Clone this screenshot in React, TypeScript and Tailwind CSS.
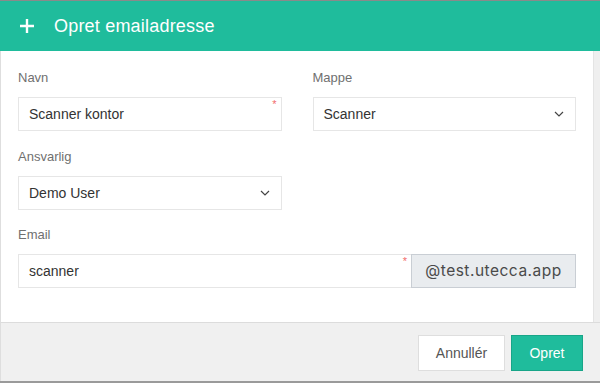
import React from 'react';

const Chevron = () => (
  <svg width="10" height="6" viewBox="0 0 10 6" fill="none" className="shrink-0">
    <path d="M1 1l4 4 4-4" stroke="#444" strokeWidth="1.2" />
  </svg>
);

const Asterisk = () => (
  <span className="absolute right-[4px] top-[1px] text-[11px] leading-none text-[#f26b6b]">*</span>
);

function Label({ children }: { children: React.ReactNode }) {
  return <div className="h-[18px] mb-[10px] text-[13px] leading-[18px] text-[#707070]">{children}</div>;
}

function SelectBox({ value }: { value: string }) {
  return (
    <div className="h-[34px] border border-[#e6e6e6] bg-white flex items-center justify-between pl-[10px] pr-[11px] text-[14px] text-[#333]">
      <span className="whitespace-pre">{value}</span>
      <Chevron />
    </div>
  );
}

export default function App() {
  return (
    <div
      className="w-[600px] h-[383px] flex flex-col border-t border-[#8a8a8a] border-b-2 border-b-[#9a9a9a] bg-white overflow-hidden"
      style={{ fontFamily: '"Liberation Sans", Arial, sans-serif' }}
    >
      {/* Header */}
      <div className="h-[50px] shrink-0 bg-[#1fbc9c] flex items-center pl-[20px] text-white">
        <svg width="14" height="14" viewBox="0 0 14 14" className="shrink-0">
          <path d="M7 0v14M0 7h14" stroke="white" strokeWidth="2.4" />
        </svg>
        <span className="ml-[20px] text-[18px] tracking-[0.2px]">Opret emailadresse</span>
      </div>

      {/* Body */}
      <div className="flex flex-1 min-h-0 border-l border-[#dedede]">
        <div className="flex-1 pt-[18px] pl-[17px] pr-[17px]">
          <div className="grid grid-cols-2 gap-x-[31px]">
            <div>
              <Label>Navn</Label>
              <div className="relative h-[34px] border border-[#e6e6e6] bg-white flex items-center pl-[10px] text-[14px] text-[#333]">
                Scanner kontor
                <Asterisk />
              </div>
            </div>
            <div>
              <Label>Mappe</Label>
              <SelectBox value="Scanner" />
            </div>
            <div className="mt-[17px]">
              <Label>Ansvarlig</Label>
              <SelectBox value="Demo User" />
            </div>
            <div />
          </div>
          <div className="mt-[16px]">
            <Label>Email</Label>
            <div className="flex h-[34px]">
              <div className="relative flex-1 border border-[#e6e6e6] border-r-0 flex items-center pl-[10px] text-[14px] text-[#333]">
                scanner
                <Asterisk />
              </div>
              <div
                className="w-[165px] border border-[#c9ced4] bg-[#e9ecef] flex items-center justify-center text-[15.5px] text-[#4a4a4a] tracking-[0.5px]"
                style={{ fontFamily: 'Inter, sans-serif' }}
              >
                @test.utecca.app
              </div>
            </div>
          </div>
        </div>
        <div className="w-[7px] bg-[#efefef] border-l border-[#e4e4e4]" />
      </div>

      {/* Footer */}
      <div className="h-[59px] shrink-0 bg-[#f0f0f0] border-t border-[#dcdcdc] border-l border-l-[#dedede] flex justify-end items-start pt-[12px] pr-[17px] gap-[6px]">
        <button className="h-[36px] w-[87px] bg-white border border-[#dedede] text-[14px] text-[#555]">Annullér</button>
        <button className="h-[36px] w-[72px] bg-[#1fbc9c] border border-[#18a588] text-[14px] text-white">Opret</button>
      </div>
    </div>
  );
}
